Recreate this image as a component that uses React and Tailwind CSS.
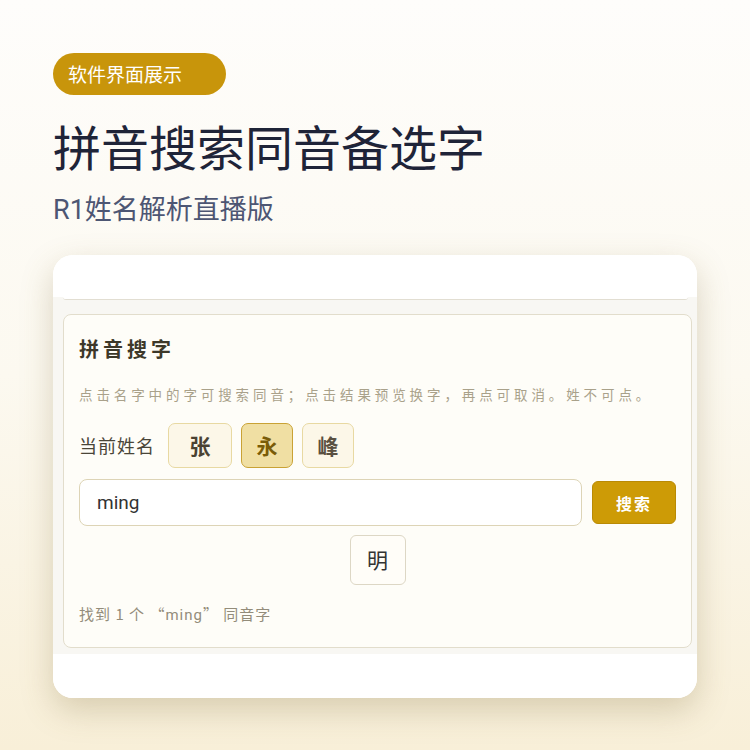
import React, { useState } from "react";

const CJK = { fontFamily: '"Noto Sans CJK SC", "Noto Sans", sans-serif' };
const MIXED = { fontFamily: 'Roboto, "Noto Sans CJK SC", sans-serif' };

const NAME_CHARS = [
  { ch: "张", surname: true },
  { ch: "永", surname: false },
  { ch: "峰", surname: false },
];

function NameChip({ ch, surname, active, onClick }) {
  const base = "flex h-[45px] items-center justify-center rounded-[7px] border text-[21px] font-bold";
  if (surname) {
    return <div className={`${base} w-16 border-[#e8d9a2] bg-[#fcf7e8] text-[#4a4232]`}>{ch}</div>;
  }
  return (
    <button
      onClick={onClick}
      className={`${base} w-[52px] ${
        active ? "border-[#c9a235] bg-[#f0dfa3] text-[#7a5c08]" : "border-[#e8d9a2] bg-[#fcf7e8] text-[#5a5040]"
      }`}
    >
      {ch}
    </button>
  );
}

export default function App() {
  const [active, setActive] = useState("永");
  const [query, setQuery] = useState("ming");
  const results = ["明"];

  return (
    <div className="min-h-[750px] w-[750px] bg-gradient-to-b from-[#fefdfb] via-[#fcf9f0] to-[#f8efd8] px-[53px] pt-[53px]" style={CJK}>
      <div className="flex h-[42px] w-[173px] items-center rounded-full bg-[#c8950b] pl-[15px] text-[19px] text-white">
        软件界面展示
      </div>
      <h1 className="mt-[18px] text-[48px] leading-[64px] font-normal text-[#1f2438]">拼音搜索同音备选字</h1>
      <p className="mt-[12px] text-[27px] leading-[38px] text-[#4d5673]">
        <span style={MIXED}>R1</span>姓名解析直播版
      </p>

      <div className="mt-[26px] overflow-hidden rounded-[20px] bg-white shadow-[0_12px_32px_rgba(130,110,60,0.28)]">
        <div className="h-[42px] bg-white" />
        <div className="bg-[#f8f7f3] pb-[6px] pl-[10px] pr-[5px]">
          <div className="mr-[4px] h-[3px] rounded-b-[8px] border-b border-[#e2ded2] bg-white" />

          <div className="mt-[14px] rounded-[8px] border border-[#e2ddcc] bg-[#fefdf8] px-[15px] pt-[20px] pb-[22px]">
            <h2 className="text-[20px] leading-[28px] font-bold tracking-[4px] text-[#3d3829]">拼音搜字</h2>
            <p className="mt-[21px] text-[13.5px] leading-[20px] tracking-[3.9px] text-[#a9a18a]">
              点击名字中的字可搜索同音；点击结果预览换字，再点可取消。姓不可点。
            </p>

            <div className="mt-[19px] flex items-center">
              <span className="mr-[13px] text-[18px] tracking-[1px] text-[#4a4538]">当前姓名</span>
              <div className="flex gap-[9px]">
                {NAME_CHARS.map((c) => (
                  <NameChip
                    key={c.ch}
                    ch={c.ch}
                    surname={c.surname}
                    active={active === c.ch}
                    onClick={() => setActive(c.ch)}
                  />
                ))}
              </div>
            </div>

            <div className="mt-[11px] flex items-center gap-[10px]">
              <input
                value={query}
                onChange={(e) => setQuery(e.target.value)}
                className="h-[47px] flex-1 rounded-[8px] border border-[#ddd4b6] bg-white px-[17px] text-[19px] text-[#333] outline-none"
                style={MIXED}
              />
              <button className="flex h-[43px] w-[84px] items-center justify-center rounded-[6px] border border-[#b98a05] bg-[#cd9b06] text-[16px] font-bold tracking-[2px] text-white">
                搜索
              </button>
            </div>

            <div className="mt-[9px] flex justify-center">
              {results.map((r) => (
                <button
                  key={r}
                  className="flex h-[50px] w-[56px] items-center justify-center rounded-[6px] border border-[#ddd7c5] bg-[#fffdf8] text-[21px] text-[#333]"
                >
                  {r}
                </button>
              ))}
            </div>

            <p className="mt-[19px] text-[15px] leading-[20px] tracking-[1px] text-[#938c7a]">
              找到 {results.length} 个 “<span style={MIXED}>{query}</span>” 同音字
            </p>
          </div>
        </div>
        <div className="h-[44px] bg-white" />
      </div>
    </div>
  );
}
